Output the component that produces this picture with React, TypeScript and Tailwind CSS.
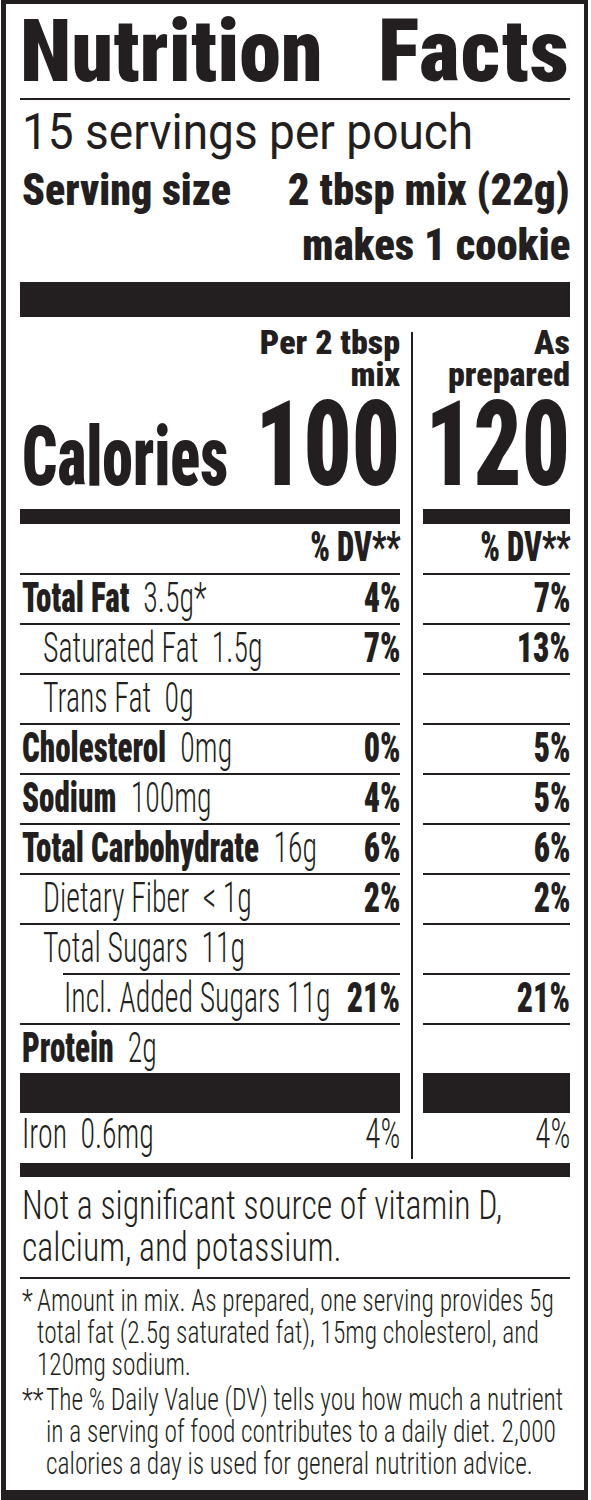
const ink = 'bg-[#231f20]';
const blk = 'font-black [font-stretch:75%]';
const lite = 'font-light [font-stretch:75%]';

type RowData = {
  b?: string;
  v?: string;
  l?: string;
  ind?: number;
  p?: string;
  q?: string;
};

const rows: RowData[] = [
  { b: 'Total Fat', v: '3.5g*', p: '4%', q: '7%' },
  { l: 'Saturated Fat  1.5g', ind: 1, p: '7%', q: '13%' },
  { l: 'Trans Fat  0g', ind: 1 },
  { b: 'Cholesterol', v: '0mg', p: '0%', q: '5%' },
  { b: 'Sodium', v: '100mg', p: '4%', q: '5%' },
  { b: 'Total Carbohydrate', v: '16g', p: '6%', q: '6%' },
  { l: 'Dietary Fiber  < 1g', ind: 1, p: '2%', q: '2%' },
  { l: 'Total Sugars  11g', ind: 1 },
  { l: 'Incl. Added Sugars 11g', ind: 2, p: '21%', q: '21%' },
  { b: 'Protein', v: '2g' },
];

function LeftRow({ r }: { r: RowData }) {
  const pad = r.ind === 2 ? 'pl-[44px]' : r.ind === 1 ? 'pl-[23px]' : 'pl-[2px]';
  return (
    <div className="h-[50px]">
      <div className={r.ind === 2 ? `ml-[43px] h-[2px] ${ink}` : `h-[2px] ${ink}`} />
      <div className={`h-[48px] leading-[45px] text-[42px] flex justify-between ${pad}`}>
        <span className="min-w-0 whitespace-pre">
          {r.b && (
            <span className={`inline-block origin-left scale-x-[0.74] ${blk}`}>
              {r.b}
              {'  '}
              <span className={`inline-block origin-left scale-x-[0.96] ${lite}`}>{r.v}</span>
            </span>
          )}
          {r.l && <span className={`inline-block origin-left scale-x-[0.71] ${lite}`}>{r.l}</span>}
        </span>
        {r.p && (
          <span className={`shrink-0 inline-block origin-right scale-x-[0.76] ${blk}`}>{r.p}</span>
        )}
      </div>
    </div>
  );
}

function RightRow({ r }: { r: RowData }) {
  return (
    <div className="h-[50px]">
      <div className={`h-[2px] ${ink}`} />
      <div className="h-[48px] leading-[45px] text-[42px] text-right">
        {r.q && <span className={`inline-block origin-right scale-x-[0.76] ${blk}`}>{r.q}</span>}
      </div>
    </div>
  );
}

function Line({ children, cls }: { children: React.ReactNode; cls: string }) {
  return (
    <div className="whitespace-nowrap">
      <span className={`inline-block origin-left ${cls}`}>{children}</span>
    </div>
  );
}

export default function App() {
  return (
    <div className="w-[591px] h-[1500px] bg-white overflow-hidden font-['Roboto',sans-serif] text-[#231f20]">
      <div className="ml-[1px] w-[587px] h-[1500px] border-t-[4px] border-l-[5px] border-r-[4px] border-b-[10px] border-[#231f20] pl-[14px] pr-[14px]">
        {/* title */}
        <div className={`h-[94px] leading-[94px] text-[87px] flex justify-between ${blk}`}>
          <span className="inline-block origin-left scale-x-[0.97]">Nutrition</span>
          <span className="inline-block origin-right tracking-[1px]">Facts</span>
        </div>
        <div className={`h-[2px] ${ink}`} />

        {/* servings */}
        <div className="mt-[3px] h-[59px] leading-[59px] text-[50px] font-normal whitespace-nowrap pl-[2px]">
          <span className="inline-block origin-left scale-x-[0.92]">15 servings per pouch</span>
        </div>
        <div className={`h-[55px] leading-[55px] text-[45px] flex justify-between pl-[2px] ${blk}`}>
          <span className="inline-block origin-left scale-x-[0.93]">Serving size</span>
          <span className="inline-block origin-right scale-x-[0.95]">2 tbsp mix (22g)</span>
        </div>
        <div className={`h-[55px] leading-[55px] text-[45px] text-right ${blk}`}>
          <span className="inline-block origin-right scale-x-[0.95]">makes 1 cookie</span>
        </div>
        <div className={`mt-[10px] h-[35px] ${ink}`} />

        {/* columns */}
        <div className="flex">
          <div className="w-[380px]">
            <div className={`h-[73px] pt-[9px] text-[34px] leading-[32px] text-right ${blk}`}>
              <div>Per 2 tbsp</div>
              <div>mix</div>
            </div>
            <div className={`h-[110px] flex justify-between items-baseline pl-[2px] ${blk}`}>
              <span className="min-w-0 whitespace-nowrap text-[83px] leading-[83px] origin-left scale-x-[0.745]">
                Calories
              </span>
              <span className="shrink-0 text-[118px] leading-[110px] origin-right scale-x-[0.8]">100</span>
            </div>
            <div className={`mt-[9px] h-[15px] ${ink}`} />
            <div className={`h-[49px] leading-[45px] text-[42px] text-right ${blk}`}>
              <span className="inline-block origin-right scale-x-[0.73]">% DV**</span>
            </div>
            {rows.map((r, i) => (
              <LeftRow key={i} r={r} />
            ))}
            <div className={`h-[40px] ${ink}`} />
            <div className={`h-[46px] leading-[41px] text-[42px] flex justify-between pl-[2px] ${lite}`}>
              <span className="inline-block whitespace-pre origin-left scale-x-[0.71]">Iron  0.6mg</span>
              <span className="inline-block origin-right scale-x-[0.74]">4%</span>
            </div>
          </div>

          <div className="w-[23px] flex justify-center pt-[15px]">
            <div className={`w-[2px] ${ink}`} />
          </div>

          <div className="w-[147px]">
            <div className={`h-[73px] pt-[9px] text-[34px] leading-[32px] text-right ${blk}`}>
              <div>As</div>
              <div>prepared</div>
            </div>
            <div className={`h-[110px] flex justify-end items-baseline ${blk}`}>
              <span className="shrink-0 text-[118px] leading-[110px] origin-right scale-x-[0.8]">120</span>
            </div>
            <div className={`mt-[9px] h-[15px] ${ink}`} />
            <div className={`h-[49px] leading-[45px] text-[42px] text-right ${blk}`}>
              <span className="inline-block origin-right scale-x-[0.73]">% DV**</span>
            </div>
            {rows.map((r, i) => (
              <RightRow key={i} r={r} />
            ))}
            <div className={`h-[40px] ${ink}`} />
            <div className={`h-[46px] leading-[41px] text-[42px] text-right ${lite}`}>
              <span className="inline-block origin-right scale-x-[0.74]">4%</span>
            </div>
          </div>
        </div>

        <div className={`mt-[4px] h-[14px] ${ink}`} />

        {/* vitamins */}
        <div className={`pt-[8px] text-[40px] leading-[42px] pl-[2px] ${lite}`}>
          <Line cls="scale-x-[0.845]">Not a significant source of vitamin D,</Line>
          <Line cls="scale-x-[0.845]">calcium, and potassium.</Line>
        </div>
        <div className={`mt-[8px] h-[2px] ${ink}`} />

        {/* footnotes */}
        <div className={`pt-[6px] text-[31px] leading-[32px] pl-[2px] ${lite}`}>
          <div className="flex">
            <span className="w-[15px] shrink-0 inline-block origin-left scale-x-[0.82]">*</span>
            <div>
              <Line cls="scale-x-[0.82]">Amount in mix. As prepared, one serving provides 5g</Line>
              <Line cls="scale-x-[0.82]">total fat (2.5g saturated fat), 15mg cholesterol, and</Line>
              <Line cls="scale-x-[0.82]">120mg sodium.</Line>
            </div>
          </div>
          <div className="flex mt-[3px]">
            <span className="w-[24px] shrink-0 inline-block origin-left scale-x-[0.82]">**</span>
            <div>
              <Line cls="scale-x-[0.82]">The % Daily Value (DV) tells you how much a nutrient</Line>
              <Line cls="scale-x-[0.82]">in a serving of food contributes to a daily diet. 2,000</Line>
              <Line cls="scale-x-[0.82]">calories a day is used for general nutrition advice.</Line>
            </div>
          </div>
        </div>
      </div>
    </div>
  );
}
